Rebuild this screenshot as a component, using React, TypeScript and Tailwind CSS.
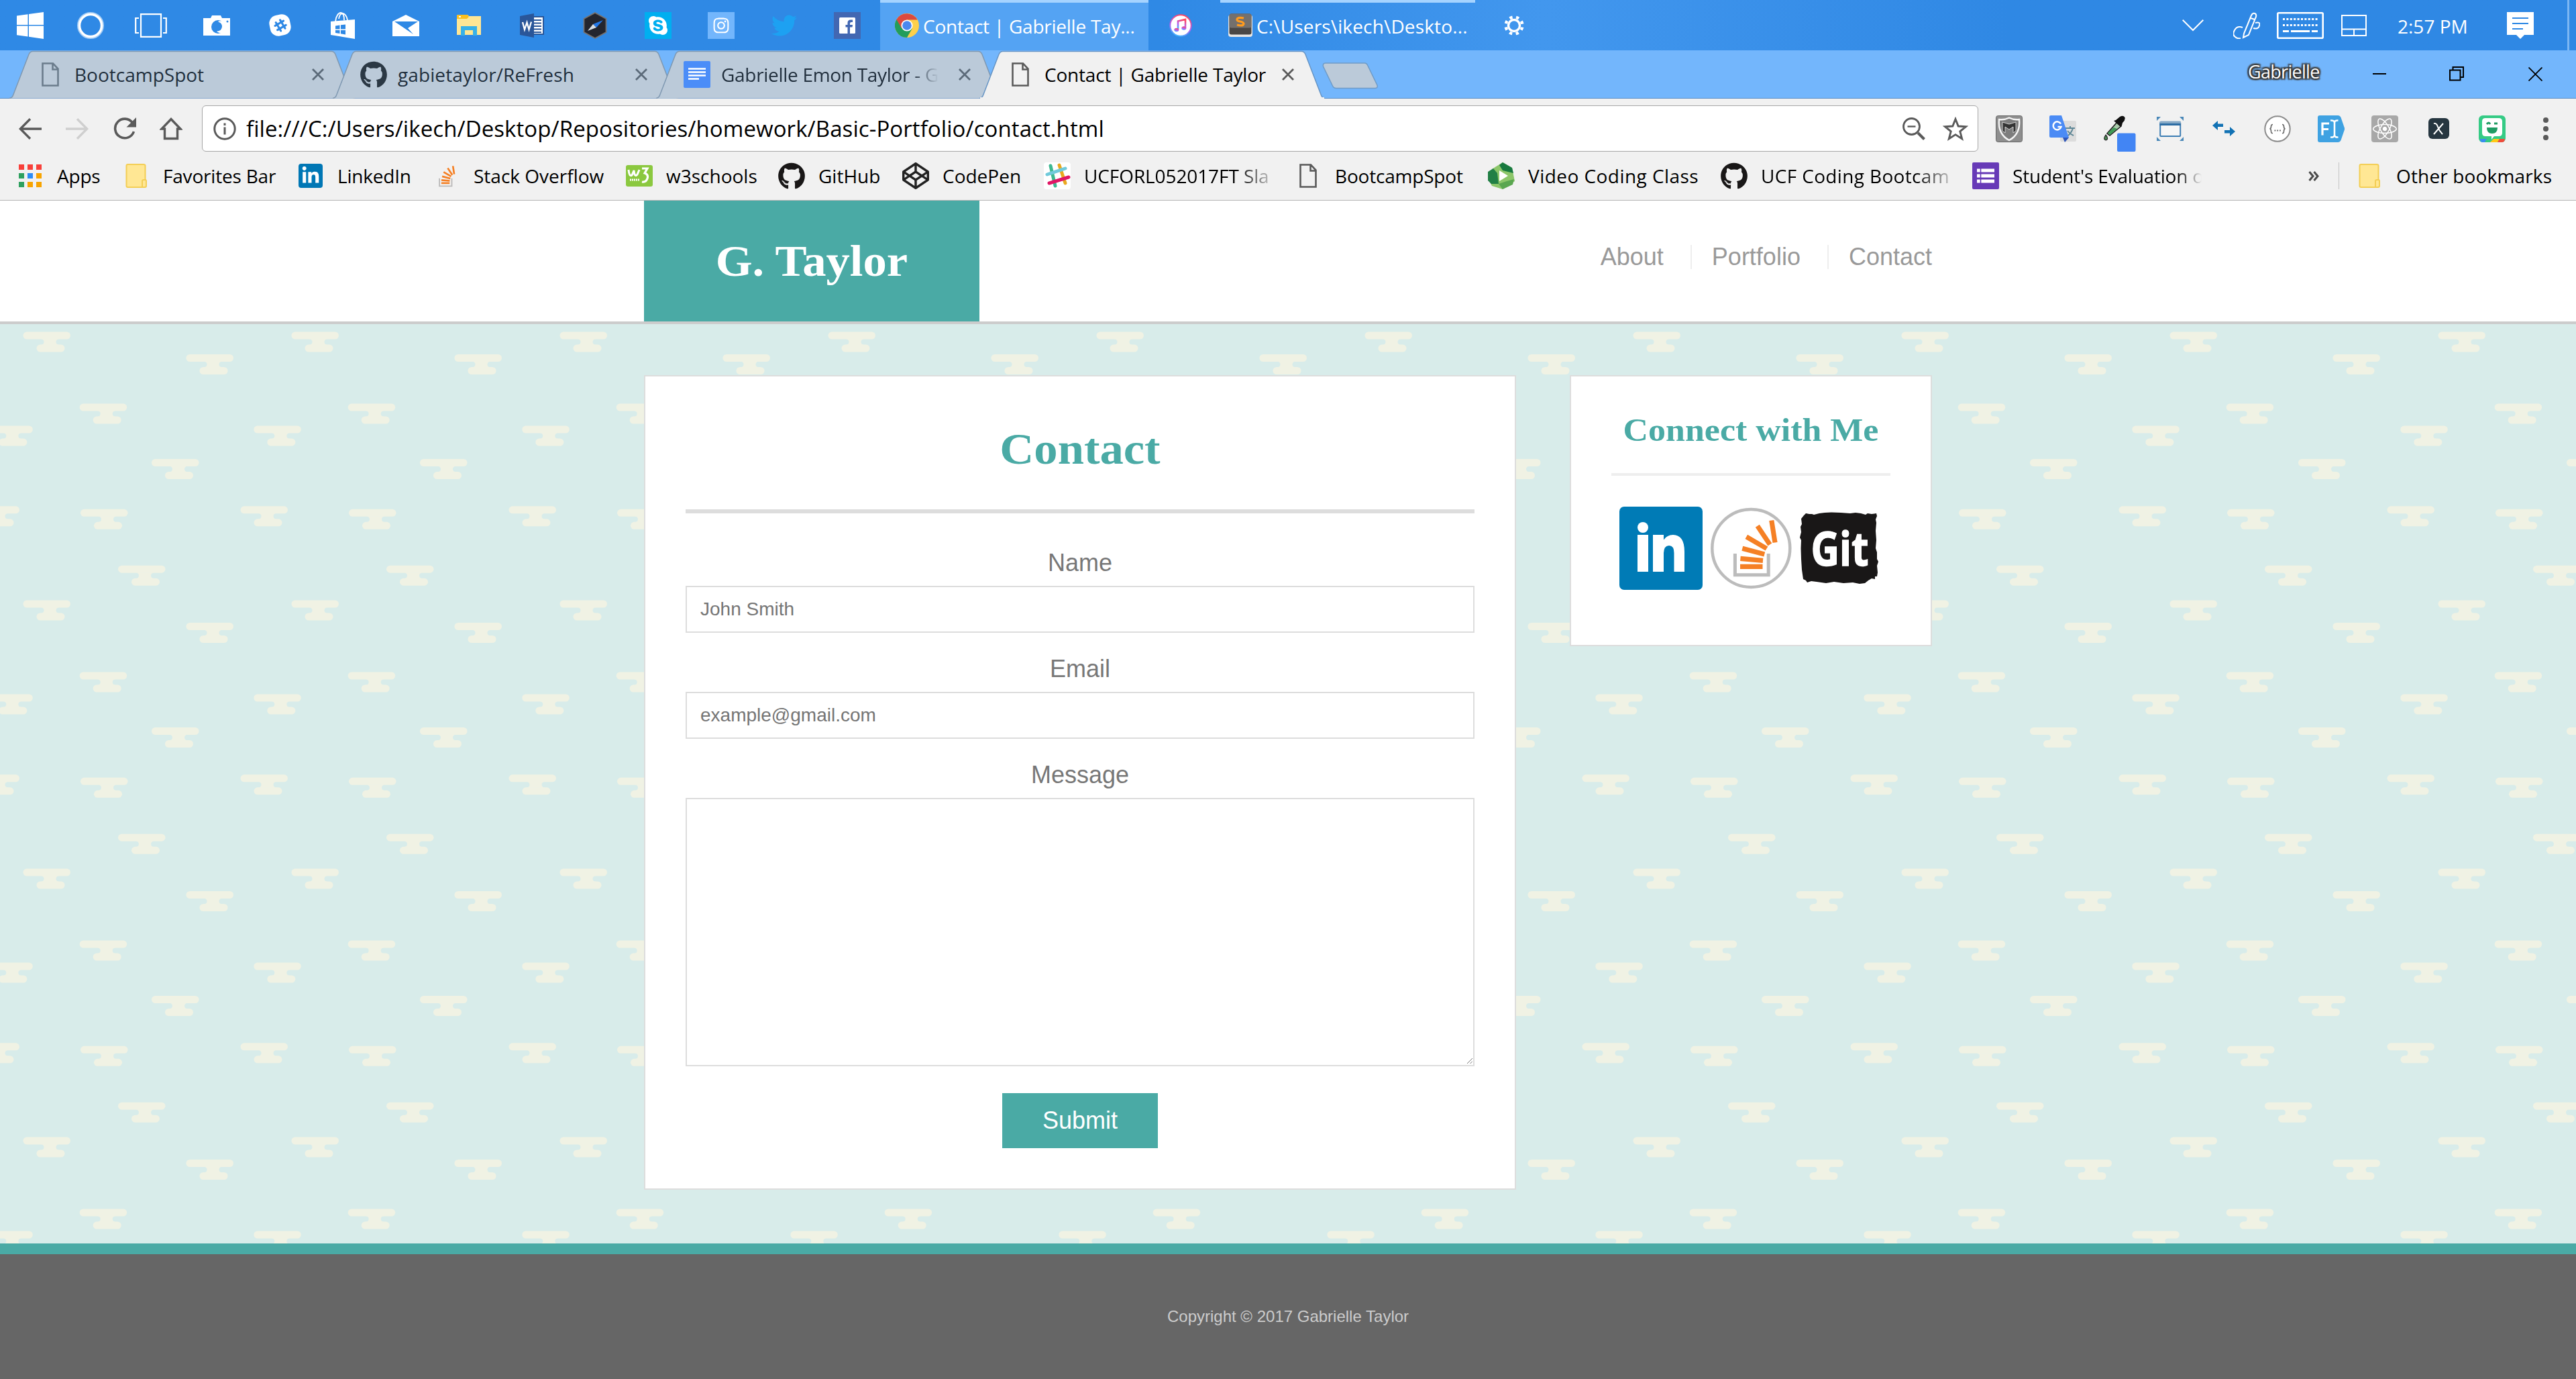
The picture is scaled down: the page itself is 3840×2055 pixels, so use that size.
import type { ReactNode } from "react";
import {
  FaCodepen,
  FaGithub,
  FaInstagram,
  FaLinkedinIn,
  FaReact,
  FaSkype,
  FaSlackHash,
  FaTwitter,
} from "react-icons/fa";

/* ---------- small shared icons ---------- */

const PageIcon = ({ color = "#5a5a5a" }: { color?: string }) => (
  <svg className="h-9 w-7" viewBox="0 0 28 36" fill="none" stroke={color} strokeWidth="2.6">
    <path d="M2.5 1.5H18L25.500 9.500V34.500H2.500ZM17.500 1.500V10.500H25.500" />
  </svg>
);

const FolderIcon = () => (
  <svg className="h-9 w-8" viewBox="0 0 32 36">
    <path
      d="M1.500 3Q1.500 1 3.500 1H27Q29.500 1 29.500 3V24Q31 24 31 26V33Q31 35 29 35H3.500Q1.500 35 1.500 33Z"
      fill="#ffe794"
      stroke="#f3ce55"
      strokeWidth="2"
    />
    <path d="M25 35V26Q25 24 27 24H31" fill="none" stroke="#f3ce55" strokeWidth="2" />
  </svg>
);

const StackBars = ({ base, bars }: { base: string; bars: string }) => (
  <g>
    <path d="M38.400 70V101.700H88.200V70" fill="none" stroke={base} strokeWidth="5" />
    <g stroke={bars} strokeWidth="7.200">
      <path d="M46 89.400H79.500" />
      <path d="M46.400 77.300L80 80.300" />
      <path d="M49.300 62.300L82.300 71" />
      <path d="M55.300 44.800L85.500 62.500" />
      <path d="M71.800 28.800L90.300 56.500" />
      <path d="M92.800 20.500L98 53.500" />
    </g>
  </g>
);

const AppsIcon = () => {
  const colors = ["#f8403a", "#f8403a", "#f8403a", "#2ea05f", "#2c8cf5", "#f7a400", "#2ea05f", "#f7a400", "#f7a400"];
  return (
    <div className="grid grid-cols-3 gap-[5px]">
      {colors.map((c, i) => (
        <span key={i} className="size-2" style={{ backgroundColor: c }} />
      ))}
    </div>
  );
};

/* ---------- taskbar ---------- */

const TaskCell = ({ children, wide = false }: { children: ReactNode; wide?: boolean }) => (
  <div className={wide ? "flex h-full w-[94px] items-center justify-center" : "flex h-full w-[90px] items-center justify-center"}>
    {children}
  </div>
);

const WindowsIcon = () => (
  <svg className="size-10" viewBox="0 0 40 40" fill="#fff">
    <path d="M0 5.500L16.500 3.200V19H0ZM18 3L40 0V19H18ZM0 20.500H16.500V36.500L0 34.200ZM18 20.500H40V40L18 36.800Z" />
  </svg>
);
const CortanaIcon = () => (
  <svg className="size-10" viewBox="0 0 40 40" fill="none">
    <circle cx="20" cy="20" r="18.500" stroke="#a5cdf5" strokeWidth="3" />
    <circle cx="20" cy="20" r="16.500" stroke="#fff" strokeWidth="3.500" />
  </svg>
);
const TaskViewIcon = () => (
  <svg className="h-9 w-12" viewBox="0 0 48 36" fill="none" stroke="#fff" strokeWidth="2.200">
    <path d="M9 1.100H39V34.900H9ZM6 7H1.200V29H6M42 7H46.800V29H42" />
  </svg>
);
const CameraIcon = () => (
  <svg className="h-[30px] w-[42px]" viewBox="0 0 42 30">
    <path d="M1 4H12L14 0H27L29 4H41V30H1Z" fill="#fff" />
    <circle cx="23" cy="17" r="10" fill="#2f89e5" />
    <path d="M23 9a9 9 0 1 1-2 15a10 10 0 0 0 2-15" fill="#fff" />
    <circle cx="22" cy="16.500" r="7" fill="#2f89e5" />
    <circle cx="37" cy="9" r="1.500" fill="#2f89e5" />
  </svg>
);
const SlackTile = () => (
  <div className="flex h-[31px] w-[31px] -rotate-12 items-center justify-center rounded-xl bg-white">
    <FaSlackHash className="size-[22px] text-[#2f89e5]" />
  </div>
);
const StoreIcon = () => (
  <svg className="h-10 w-9" viewBox="0 0 36 40">
    <path d="M7 14C8 5 12 1 15 1S20 4 20 12M12 10C13 4 16 2 18 2S24 5 25 12" fill="none" stroke="#fff" strokeWidth="1.800" />
    <path d="M0 14L36 11V40L0 34Z" fill="#fff" />
    <path d="M7 20.500L13.500 19.500V25.500H7ZM15 19.200L22 18.500V25.500H15ZM7 27H13.500V32L7 31ZM15 27H22V33.500L15 32.300Z" fill="#2f89e5" />
  </svg>
);
const MailIcon = () => (
  <svg className="h-8 w-10" viewBox="0 0 40 32">
    <path d="M0 10L20 0L40 10V32H0Z" fill="#fff" />
    <path d="M3 10H38L23 20L31 29Z" fill="#2f89e5" />
  </svg>
);
const ExplorerIcon = () => (
  <svg className="h-8 w-9" viewBox="0 0 36 32">
    <path d="M0 2Q0 0 2 0H16L18 2H36V30H0Z" fill="#ffe694" />
    <path d="M0 2Q0 0 2 0H16L18 3L15 6H0Z" fill="#fcbf1e" />
    <path d="M6 31V17H30V31H24V23H12V31Z" fill="#38b1e8" />
    <rect x="3" y="2" width="3" height="2" fill="#fff" />
  </svg>
);
const WordIcon = () => (
  <svg className="size-9" viewBox="0 0 36 36">
    <rect x="16" y="5" width="19" height="26" fill="#fff" stroke="#2a5699" strokeWidth="2" />
    <path d="M20 10H32M20 14.500H32M20 19H32M20 23.500H32M20 28H32" stroke="#2a5699" strokeWidth="2" />
    <path d="M0 4L21 0V36L0 32Z" fill="#2a5699" />
    <path d="M4 13L7 24L10.500 13.500L13.500 24L17 12.500" fill="none" stroke="#fff" strokeWidth="2.300" />
  </svg>
);
const CompassIcon = () => (
  <svg className="h-10 w-9" viewBox="0 0 36 40">
    <path d="M18 1L34.500 10V30L18 39L1.500 30V10Z" fill="#23252e" stroke="#77716d" strokeWidth="1.800" />
    <path d="M30 12L20 23L15 18Z" fill="#2277e8" />
    <path d="M7 28L20 23L15 18Z" fill="#d6dde4" />
  </svg>
);
const ChromeIcon = () => (
  <svg className="size-9" viewBox="0 0 36 36">
    <circle cx="18" cy="18" r="18" fill="#fdd04a" />
    <path d="M18 18L2.400 9A18 18 0 0 0 18 36L25.800 22.500Z" fill="#229d5b" />
    <path d="M2.400 9A18 18 0 0 1 33.600 9.500H18L10.200 22.500Z" fill="#db4a3f" />
    <circle cx="18" cy="18" r="8.600" fill="#fff" />
    <circle cx="18" cy="18" r="6.800" fill="#4a88f0" />
  </svg>
);
const ITunesIcon = () => (
  <svg className="size-[34px]" viewBox="0 0 34 34">
    <defs>
      <linearGradient id="itunes" x1="0.300" y1="1" x2="0.600" y2="0">
        <stop offset="0" stopColor="#3bb8ff" />
        <stop offset="0.450" stopColor="#b45ff0" />
        <stop offset="1" stopColor="#ff4560" />
      </linearGradient>
    </defs>
    <circle cx="17" cy="17" r="15.700" fill="#fff" stroke="url(#itunes)" strokeWidth="2" />
    <path d="M13 23V10.500L24 8V20.500" fill="none" stroke="url(#itunes)" strokeWidth="2.600" />
    <ellipse cx="10.800" cy="23.500" rx="3.500" ry="2.800" fill="url(#itunes)" />
    <ellipse cx="21.800" cy="21" rx="3.500" ry="2.800" fill="url(#itunes)" />
  </svg>
);
const SublimeIcon = () => (
  <svg className="size-9" viewBox="0 0 36 36">
    <rect x="0" y="2" width="36" height="33" rx="4" fill="#e8e6e4" />
    <rect x="1.500" y="0.500" width="33" height="31" rx="3" fill="#4a4745" />
    <rect x="1.500" y="0.500" width="33" height="21" rx="3" fill="#74706d" />
    <path d="M23 7Q13 5 13 9.500C13 13 23 11 23 15.500Q22 19.500 13 17" fill="none" stroke="#ff9b1e" strokeWidth="3.200" />
  </svg>
);
const GearIcon = () => (
  <svg className="size-[30px]" viewBox="0 0 30 30" fill="none" stroke="#fff">
    <circle cx="15" cy="15" r="8.500" strokeWidth="3.400" />
    <circle cx="15" cy="15" r="12.500" strokeWidth="4.400" strokeDasharray="4.300 5.517" strokeDashoffset="-2.700" />
  </svg>
);
const PenIcon = () => (
  <svg className="size-10" viewBox="0 0 40 40" fill="none" stroke="#fff" strokeWidth="2">
    <path d="M16 32L27 5Q29 1 32 2T34 7L23 34L15 38Z M26 9L32 11" />
    <path d="M14 23Q6 20 2 27T3 37Q6 40 11 39M33 16Q41 14 39 20Q38 26 30 24" />
  </svg>
);
const KeyboardIcon = () => (
  <svg className="h-10 w-[70px]" viewBox="0 0 70 40" fill="none" stroke="#fff">
    <rect x="1.300" y="1.300" width="67.400" height="37.400" rx="1.500" strokeWidth="2.600" />
    <path d="M9 10.500H61M9 19.500H61" strokeWidth="3" strokeDasharray="3 2.400" />
    <path d="M9 28.500H18M21 28.500H49M52 28.500H61" strokeWidth="3" />
  </svg>
);
const TouchpadIcon = () => (
  <svg className="h-8 w-[38px]" viewBox="0 0 38 32" fill="none" stroke="#fff" strokeWidth="2">
    <path d="M1 1H37V31H1ZM1 21.500H37M19 21.500V31" />
  </svg>
);
const ActionIcon = () => (
  <svg className="size-10" viewBox="0 0 40 40">
    <path d="M0 0H40V34H26L20 40L14 34H0Z" fill="#fff" />
    <path d="M8 9H32M8 17H32M8 25H24" stroke="#2f89e5" strokeWidth="2.200" />
  </svg>
);

const Taskbar = () => (
  <div className="flex h-[75px] items-center bg-linear-to-r from-[#2f89e5] from-45% via-[#4297ee] via-60% to-[#2f88e4] to-78% text-white">
    <TaskCell><WindowsIcon /></TaskCell>
    <TaskCell><CortanaIcon /></TaskCell>
    <TaskCell><TaskViewIcon /></TaskCell>
    <div className="ml-1.5 flex h-full w-[1036px] items-center">
      <TaskCell wide><CameraIcon /></TaskCell>
      <TaskCell wide><SlackTile /></TaskCell>
      <TaskCell wide><StoreIcon /></TaskCell>
      <TaskCell wide><MailIcon /></TaskCell>
      <TaskCell wide><ExplorerIcon /></TaskCell>
      <TaskCell wide><WordIcon /></TaskCell>
      <TaskCell wide><CompassIcon /></TaskCell>
      <TaskCell wide>
        <div className="flex size-10 items-center justify-center bg-[#00aff0]">
          <FaSkype className="size-8" />
        </div>
      </TaskCell>
      <TaskCell wide>
        <div className="flex size-10 items-center justify-center bg-[#73b6fc]">
          <FaInstagram className="size-[26px]" />
        </div>
      </TaskCell>
      <TaskCell wide><FaTwitter className="size-[38px] text-[#1da1f2]" /></TaskCell>
      <TaskCell wide>
        <div className="flex size-10 items-center justify-center bg-[#4267b2]">
          <svg className="size-6" viewBox="0 0 24 24">
            <rect width="24" height="24" rx="1.500" fill="#fff" />
            <path d="M16 24V14.500H19.500L20 11H16V9Q16 7 18 7H20V3.500H17Q12.500 3.500 12.500 8V11H9.500V14.500H12.500V24Z" fill="#4267b2" />
          </svg>
        </div>
      </TaskCell>
    </div>
    <div className="flex h-full w-[400px] items-center border-t-4 border-[#a5d3ff] bg-[#54a3f3] pl-[22px] pb-1">
      <ChromeIcon />
      <span className="ml-1.5 pt-0.5 text-[28px] tracking-[-0.25px] whitespace-nowrap">Contact | Gabrielle Tay...</span>
    </div>
    <div className="flex w-[107px] pl-[31px]"><ITunesIcon /></div>
    <div className="flex h-full w-[380px] items-center border-t-4 border-[#a5d3ff] pl-3 pb-1">
      <SublimeIcon />
      <span className="ml-1.5 pt-0.5 text-[28px] tracking-[0.15px] whitespace-nowrap">C:\Users\ikech\Deskto...</span>
    </div>
    <div className="ml-[43px]"><GearIcon /></div>
    <div className="ml-auto flex h-full items-center">
      <svg className="mr-11 h-[18px] w-8" viewBox="0 0 32 18" fill="none" stroke="#fff" strokeWidth="2">
        <path d="M0.700 0.700L16 16L31.300 0.700" />
      </svg>
      <PenIcon />
      <div className="mr-[26px] ml-[25px]"><KeyboardIcon /></div>
      <TouchpadIcon />
      <span className="ml-[46px] w-[163px] pt-0.5 text-[28px] whitespace-nowrap">2:57 PM</span>
      <ActionIcon />
      <div className="mr-2.5 ml-[50px] h-full w-[3px] bg-[#7bb6f3]" />
    </div>
  </div>
);

/* ---------- browser tabs ---------- */

const CloseIcon = ({ color }: { color: string }) => (
  <svg className="size-[18px]" viewBox="0 0 18 18" stroke={color} strokeWidth="2.800">
    <path d="M1 1L17 17M17 1L1 17" />
  </svg>
);

const Tab = ({ icon, title, active = false, text }: { icon: ReactNode; title: string; active?: boolean; text: string }) => (
  <div className={active ? "z-10 -mr-[33px] grid h-[72px] w-[515px]" : "-mr-[33px] grid h-[72px] w-[515px]"}>
    <svg className="col-start-1 row-start-1 h-[72px] w-[515px]" viewBox="0 0 515 72">
      <path
        d="M0 71.500Q4 71 5.500 67L29 6Q31 1.500 35 1.500H480Q484 1.500 486 6L509.500 67Q511 71 515 71.500"
        fill={active ? "#f1f1f1" : "#bbcad9"}
        stroke={active ? "#6795c5" : "#7f98b1"}
        strokeWidth="1.500"
      />
      {active && <rect x="1" y="70" width="513" height="2" fill="#f1f1f1" />}
    </svg>
    <div className="col-start-1 row-start-1 flex items-center pl-[41px]">
      <span className="flex w-10 items-center justify-center">{icon}</span>
      <span className="ml-4 flex w-[354px]">
        <span className={`text-[28px] leading-9 whitespace-nowrap ${text}`}>{title}</span>
      </span>
      <CloseIcon color={active ? "#5a5a5a" : "#5b6a79"} />
    </div>
  </div>
);

const DocsIcon = () => (
  <svg className="size-10" viewBox="0 0 40 40">
    <rect width="40" height="40" rx="2" fill="#4b8df8" />
    <path d="M7 11.500H33M7 16.500H33M7 21.500H33M7 26.500H23" stroke="#fff" strokeWidth="2.600" />
  </svg>
);

const TabStrip = () => (
  <div className="flex h-[72px] border-b-[1.5px] border-[#5e8fc4] bg-[#73b6fc]">
    <div className="flex pl-3.5">
      <Tab icon={<PageIcon color="#6b7c8c" />} title="BootcampSpot" text="text-[#22303e]" />
      <Tab
        icon={<FaGithub className="size-[41px] text-[#2b3844]" />}
        title="gabietaylor/ReFresh"
        text="tracking-[0.1px] text-[#22303e]"
      />
      <Tab
        icon={<DocsIcon />}
        title="Gabrielle Emon Taylor - G"
        text="mask-r-from-88% mask-r-to-100% tracking-[-0.3px] text-[#22303e]"
      />
      <Tab icon={<PageIcon />} title="Contact | Gabrielle Taylor" active text="tracking-[-0.2px] text-black" />
    </div>
    <svg className="mt-[18px] ml-[29px] h-10 w-[84px]" viewBox="0 0 84 40">
      <path d="M1.500 6Q0.500 1 5 1H63Q66.500 1 68 5L82 34Q83 38.500 79 38.500H21Q17 38.500 15.500 35Z" fill="#bbcad9" stroke="#6f9bc6" strokeWidth="1.500" />
    </svg>
    <div className="ml-auto flex h-[66px] items-center text-black">
      <span className="w-[186px] pb-0.5 text-[27px] tracking-[-0.7px] text-white [text-shadow:0_0_2px_#333,0_0_2px_#333,0_0_3px_#333,0_0_3px_#333,2px_2px_2px_#444,-2px_-2px_2px_#444,2px_-2px_2px_#444,-2px_2px_2px_#444]">
        Gabrielle
      </span>
      <span className="mt-1 h-0.5 w-5 bg-black" />
      <svg className="mt-1 ml-[94px] size-[22px]" viewBox="0 0 22 22" fill="none" stroke="#000" strokeWidth="2">
        <path d="M1 5.500H16.500V20.500H1ZM5.500 5V1H21V16H17" />
      </svg>
      <svg className="mt-1 mr-[50px] ml-24 size-[21px]" viewBox="0 0 21 21" stroke="#000" strokeWidth="1.800">
        <path d="M0.500 0.500L20.500 20.500M20.500 0.500L0.500 20.500" />
      </svg>
    </div>
  </div>
);

/* ---------- address bar ---------- */

const ExtCell = ({ children }: { children: ReactNode }) => (
  <div className="flex w-20 items-center justify-center">{children}</div>
);

const Toolbar = () => (
  <div className="flex h-[89px] items-center">
    <svg className="ml-7 h-8 w-[34px]" viewBox="0 0 34 32" fill="none" stroke="#5a5a5a" strokeWidth="3.400">
      <path d="M34 16H3M17 1.200L2.300 16L17 30.800" />
    </svg>
    <svg className="ml-9 h-8 w-[34px]" viewBox="0 0 34 32" fill="none" stroke="#cfcfcf" strokeWidth="3.400">
      <path d="M0 16H31M17 1.200L31.700 16L17 30.800" />
    </svg>
    <svg className="ml-9 h-[34px] w-9" viewBox="0 0 36 34">
      <path d="M29.500 8A14.300 14.300 0 1 0 31.500 21" fill="none" stroke="#5a5a5a" strokeWidth="3.600" />
      <path d="M35 0V14.500H20.500Z" fill="#5a5a5a" />
    </svg>
    <svg className="ml-[34px] h-[34px] w-[34px]" viewBox="0 0 34 34" fill="none" stroke="#5a5a5a" strokeWidth="3.400">
      <path d="M17 2.500L31 17H26.500V31.500H7.500V17H3Z" />
    </svg>
    <div className="ml-[29px] flex h-[69px] w-[2648px] items-center rounded-md border-[1.5px] border-[#a6a6a6] bg-white">
      <svg className="ml-4 size-[34px]" viewBox="0 0 34 34" fill="none" stroke="#5a5a5a" strokeWidth="3">
        <circle cx="17" cy="17" r="15.200" />
        <path d="M17 14.500V25.500M17 8.500V12" />
      </svg>
      <span className="ml-[15px] text-[33px] tracking-[0.08px] whitespace-nowrap text-black">
        file:///C:/Users/ikech/Desktop/Repositories/homework/Basic-Portfolio/contact.html
      </span>
      <svg className="ml-auto h-[34px] w-[34px]" viewBox="0 0 34 34" fill="none" stroke="#5a5a5a" strokeWidth="2.800">
        <circle cx="13.500" cy="13.500" r="12" />
        <path d="M7.500 13.500H19.500" strokeWidth="2.400" />
        <path d="M23 23L32.500 32.500" strokeWidth="4" />
      </svg>
      <svg className="mr-[14px] ml-[26px] h-9 w-[38px]" viewBox="0 0 38 36" fill="none" stroke="#5a5a5a" strokeWidth="2.900">
        <path d="M19 3.500L23.200 14L34.500 14.700L25.800 21.800L28.700 32.700L19 26.600L9.300 32.700L12.200 21.800L3.500 14.700L14.800 14Z" />
      </svg>
    </div>
    <div className="ml-[6px] flex">
      <ExtCell>
        <svg className="size-10" viewBox="0 0 40 40">
          <rect x="0.500" y="0.500" width="39" height="39" rx="3" fill="#8e8e8e" stroke="#666" />
          <path d="M5 6Q13 7 20 3.500Q27 7 35 6Q37 28 20 37Q3 28 5 6Z" fill="#7d7d7d" stroke="#f4f4f4" strokeWidth="2.400" />
          <path d="M10 10L20 13L30 10V23L26 26V17L20 21L14 17V26L10 23Z" fill="#333" stroke="#eee" strokeWidth="0.800" />
        </svg>
      </ExtCell>
      <ExtCell>
        <svg className="size-10" viewBox="0 0 40 40">
          <rect x="16" y="8" width="24" height="31" rx="2" fill="#dcdcdc" />
          <path d="M24 19H38M31 16V19M35 19Q33 27 25 32M27 23Q31 28 36 30" stroke="#5f8796" strokeWidth="2" fill="none" />
          <path d="M2 0H18L29 33H2Q0 33 0 31V2Q0 0 2 0Z" fill="#4b8bf5" />
          <path d="M20 33H29L23 40Z" fill="#2f56b8" />
          <path d="M17 12.500A6 6 0 1 0 17.500 17H12.500" fill="none" stroke="#fff" strokeWidth="2.500" />
        </svg>
      </ExtCell>
      <ExtCell>
        <svg className="-mb-3.5 ml-2.5 h-[54px] w-[48px]" viewBox="0 0 48 54">
          <path d="M20 10L26 16L9 30L5 27Z" fill="#a9c9aa" stroke="#222" strokeWidth="1.600" />
          <path d="M15 18L20 20L9 29L6 26Z" fill="#3f9a55" />
          <path d="M15 8L18 7L24 2Q29 -1 31.500 3Q32.500 7 28 11L27 15L25 17Z" fill="#111" />
          <path d="M3 29Q-0.500 34 1.500 36Q4 38 5.500 35Q6 32 3 29Z" fill="#4c8a55" stroke="#222" strokeWidth="1.200" />
          <rect x="20" y="26.500" width="27.500" height="27.500" rx="2" fill="#4285f4" />
        </svg>
      </ExtCell>
      <ExtCell>
        <svg className="size-10" viewBox="0 0 40 40">
          <path d="M0 2H6L0 8ZM34 2H40V8ZM0 38V32L6 38ZM40 38H34L40 32Z" fill="#4a88b8" />
          <rect x="5.200" y="10" width="30" height="21" rx="1" fill="#f6f6f6" stroke="#3d7db3" strokeWidth="2" />
          <path d="M4.500 10Q4.500 8.500 6 8.500H34.500Q36 8.500 36 10V12.500H4.500Z" fill="#86a9c6" />
          <path d="M4.500 13.500H36" stroke="#2c6da4" strokeWidth="3" />
        </svg>
      </ExtCell>
      <ExtCell>
        <svg className="h-6 w-[34px]" viewBox="0 0 34 24" fill="#1272b4">
          <path d="M0 7L8 0V4.500H16V9H8V14ZM34 16L26 23V18.500H18V14H26V9Z" />
        </svg>
      </ExtCell>
      <ExtCell>
        <svg className="size-10" viewBox="0 0 40 40" fill="none" stroke="#8b8b8b">
          <circle cx="20" cy="20" r="18.700" fill="#fff" strokeWidth="2" />
          <path d="M13 13.500Q10.500 13.500 10.500 16.500T8.500 20Q10.500 20 10.500 23.500T13 26.500M27 13.500Q29.500 13.500 29.500 16.500T31.500 20Q29.500 20 29.500 23.500T27 26.500" stroke="#666" strokeWidth="1.600" />
          <path d="M15.500 22.500H25.500" stroke="#666" strokeWidth="1.800" strokeDasharray="1.800 2" />
        </svg>
      </ExtCell>
      <ExtCell>
        <svg className="size-10" viewBox="0 0 40 40" fill="none" stroke="#fff" strokeWidth="3.200">
          <path d="M3 0H30Q33 0 34.500 3L40 19V21L34.500 37Q33 40 30 40H3Q0 40 0 37V3Q0 0 3 0Z" fill="#3fa2e2" stroke="none" />
          <path d="M7 29.500V12H17M7 20.500H16" />
          <path d="M19 7.500Q25 7 25 11V29Q25 33 19 32.500M30.500 7.500Q25 7 25 11M30.500 32.500Q25 33 25 29" strokeWidth="2.600" />
        </svg>
      </ExtCell>
      <ExtCell>
        <div className="flex size-10 items-center justify-center rounded-sm bg-[#a8a8a8]">
          <FaReact className="size-9 text-white" />
        </div>
      </ExtCell>
      <ExtCell>
        <div className="flex size-[31px] items-center justify-center rounded-md bg-[#263640]">
          <svg className="size-[18px]" viewBox="0 0 18 18" fill="none" stroke="#fff" strokeWidth="2">
            <path d="M2 1Q6 0 8 6T15 17M16 1L2 17" />
          </svg>
        </div>
      </ExtCell>
      <ExtCell>
        <svg className="size-10" viewBox="0 0 40 40">
          <rect width="40" height="40" rx="6" fill="#35cb85" />
          <path d="M2 35L12 35L9 40H6Q2 40 2 35Z" fill="#3a8df0" />
          <path d="M17 40L22 35H31L28 40Z" fill="#ffca16" />
          <path d="M28 40L31 35H39Q39 40 34 40Z" fill="#f04b3c" />
          <path d="M10 4H30Q35 4 35 9V26Q35 31 30 31H23L19 36V31H10Q5 31 5 26V9Q5 4 10 4Z" fill="#fff" />
          <path d="M12 18H28Q28 27 20 27T12 18Z" fill="#1f9c63" />
          <path d="M12 13Q15 9 17 13M23 12H28" stroke="#1f9c63" strokeWidth="3" fill="none" />
        </svg>
      </ExtCell>
      <ExtCell>
        <div className="flex flex-col gap-[5px]">
          <span className="size-2 rounded-full bg-[#5a5a5a]" />
          <span className="size-2 rounded-full bg-[#5a5a5a]" />
          <span className="size-2 rounded-full bg-[#5a5a5a]" />
        </div>
      </ExtCell>
    </div>
  </div>
);

/* ---------- bookmarks ---------- */

const Bookmark = ({
  icon,
  label,
  width,
  text = "tracking-[-0.2px]",
}: {
  icon: ReactNode;
  label: string;
  width: string;
  text?: string;
}) => (
  <div className={`flex shrink-0 items-center ${width}`}>
    <span className="flex w-10 shrink-0 items-center justify-center">{icon}</span>
    <span className={`mb-px ml-5 text-[28px] leading-9 whitespace-nowrap text-black ${text}`}>{label}</span>
  </div>
);

const BookmarksBar = () => (
  <div className="flex h-[63px] items-center border-b-[1.5px] border-[#b5b5b5] pb-2.5 pl-[25px]">
    <Bookmark icon={<AppsIcon />} label="Apps" width="w-[158px]" />
    <Bookmark icon={<FolderIcon />} label="Favorites Bar" width="w-[260px]" text="tracking-[-0.2px]" />
    <Bookmark
      icon={
        <span className="flex size-9 items-center justify-center rounded-sm bg-[#0077b5]">
          <FaLinkedinIn className="size-7 text-white" />
        </span>
      }
      label="LinkedIn"
      width="w-[203px]"
    />
    <Bookmark
      icon={
        <svg className="h-[34px] w-8" viewBox="30 14 76 92">
          <StackBars base="#bcbbbb" bars="#f58025" />
        </svg>
      }
      label="Stack Overflow"
      width="w-[287px]"
      text="tracking-normal"
    />
    <Bookmark
      icon={
        <svg className="h-8 w-10" viewBox="0 0 40 32" fill="none" stroke="#fff">
          <rect width="40" height="32" rx="3" fill="#8bc83f" stroke="none" />
          <path d="M4 7Q5 18 9 15L12 8Q13 19 17 14L20 7" strokeWidth="3" />
          <path d="M24 5H32L28 12Q34 14 32 20T24 25" strokeWidth="3.200" />
          <path d="M6 22H20" strokeWidth="3" strokeDasharray="2 1" />
        </svg>
      }
      label="w3schools"
      width="w-[227px]"
      text="tracking-normal"
    />
    <Bookmark icon={<FaGithub className="size-[41px] text-[#191717]" />} label="GitHub" width="w-[185px]" text="tracking-normal" />
    <Bookmark icon={<FaCodepen className="size-10 text-[#222]" />} label="CodePen" width="w-[211px]" text="tracking-normal" />
    <Bookmark
      icon={
        <svg className="size-10" viewBox="0 0 40 40" strokeWidth="5" strokeLinecap="round">
          <rect width="40" height="40" rx="4" fill="#fff" />
          <path d="M10 5L17 35" stroke="#3eb890" />
          <path d="M23 4L32 31" stroke="#e9a820" />
          <path d="M5 18L32 9" stroke="#70cadb" />
          <path d="M8 31L37 22" stroke="#e01765" />
        </svg>
      }
      label="UCFORL052017FT Sla"
      width="w-[374px]"
      text="mask-r-from-82% mask-r-to-105% tracking-[-0.1px]"
    />
    <Bookmark icon={<PageIcon />} label="BootcampSpot" width="w-[288px]" />
    <Bookmark
      icon={
        <svg className="size-10" viewBox="0 0 40 40">
          <path d="M22 0L36 8L40 28L22 40L6 35L0 24L6 10Z" fill="#8cc66a" />
          <path d="M17 4L22 0L36 8L38 16L22 12Z" fill="#17793f" />
          <path d="M0 14L8 9L14 16L16 32H5L0 27Z" fill="#217f45" />
          <path d="M16 32L28 28L39 25L37 33L22 40Z" fill="#5aa650" />
          <path d="M17 12L30 20L17 28Z" fill="#fff" />
        </svg>
      }
      label="Video Coding Class"
      width="w-[347px]"
      text="tracking-[0.45px]"
    />
    <Bookmark
      icon={<FaGithub className="size-[41px] text-[#191717]" />}
      label="UCF Coding Bootcam"
      width="w-[375px]"
      text="mask-r-from-82% mask-r-to-105% tracking-[0.35px]"
    />
    <Bookmark
      icon={
        <svg className="size-10" viewBox="0 0 40 40">
          <rect width="40" height="40" rx="2" fill="#673ab7" />
          <path d="M7 12H33M7 20H33M7 28H33" stroke="#fff" strokeWidth="5" />
          <path d="M12.500 9V31" stroke="#673ab7" strokeWidth="1.600" />
        </svg>
      }
      label="Student's Evaluation o"
      width="w-[344px]"
      text="mask-r-from-86% mask-r-to-99% tracking-[-0.2px]"
    />
    <svg className="ml-[157px] h-[15px] w-[17px]" viewBox="0 0 17 15" fill="none" stroke="#4a4a4a" strokeWidth="3">
      <path d="M1.500 1L7 7.500L1.500 14M8.500 1L14 7.500L8.500 14" />
    </svg>
    <span className="mr-[25px] ml-7 h-10 w-px bg-[#c4c4c4]" />
    <Bookmark icon={<FolderIcon />} label="Other bookmarks" width="w-[320px]" text="tracking-[0.15px]" />
  </div>
);

/* ---------- portfolio page ---------- */

const cloudSpots = [
  [34.5, 11.5],
  [277.5, 45],
  [118.7, 118.5],
  [378.3, 151.5],
  [-21.7, 151.5],
  [226, 201],
  [358.5, 271.3],
  [-41.5, 271.3],
  [120, 275.8],
  [176, 359.7],
];

const CloudPattern = () => (
  <svg className="col-start-1 row-start-1 h-full w-full" aria-hidden="true">
    <defs>
      <g id="cloud" fill="#f0f2e4">
        <rect width="70.500" height="11" rx="5.500" />
        <rect x="20" y="19" width="42" height="11" rx="5.500" />
        <path d="M26 10.500Q31 11 31 15T26 19.500H54Q49 19 49 15T54 10.500Z" />
      </g>
      <pattern id="clouds" width="400" height="400" patternUnits="userSpaceOnUse">
        {cloudSpots.map(([x, y], i) => (
          <use key={i} href="#cloud" x={x} y={y} />
        ))}
      </pattern>
    </defs>
    <rect width="100%" height="100%" fill="url(#clouds)" />
  </svg>
);

const Header = () => (
  <header className="h-[184px] border-b-4 border-[#ccc] bg-white">
    <div className="mx-auto flex h-full w-[1920px] justify-between">
      <h1 className="flex w-[500px] items-center justify-center bg-[#4aaaa5] pb-[2px] font-['Georgia','Liberation_Serif',serif] text-[66px] font-bold text-white">
        <span className="scale-x-[1.07]">G. Taylor</span>
      </h1>
      <nav className="flex h-9 translate-y-[66px] text-4xl leading-9 text-[#999]">
        <a className="border-r-2 border-[#eee] pr-10 leading-9">About</a>
        <a className="border-r-2 border-[#eee] pr-10 pl-[30px] leading-9">Portfolio</a>
        <a className="pl-[30px] leading-9">Contact</a>
      </nav>
    </div>
  </header>
);

const ContactForm = () => (
  <section className="h-[1214px] w-[1300px] border-2 border-[#ddd] bg-white px-[60px] pt-[72px] text-center">
    <h2 className="scale-x-[1.07] font-['Georgia','Liberation_Serif',serif] text-[66px] leading-[72px] font-bold text-[#4aaaa5]">
      Contact
    </h2>
    <hr className="mt-[54px] h-1.5 border-0 bg-[#ddd]" />
    <form className="mt-[53px]">
      <label className="block text-4xl leading-[42px] text-[#777]">Name</label>
      <input
        className="mt-[13px] block h-[70px] w-full border-2 border-[#ddd] px-5 text-[28px] placeholder:text-[#757575]"
        placeholder="John Smith"
      />
      <label className="mt-[33px] block text-4xl leading-[42px] text-[#777]">Email</label>
      <input
        className="mt-[13px] block h-[70px] w-full border-2 border-[#ddd] px-5 text-[28px] placeholder:text-[#757575]"
        placeholder="example@gmail.com"
      />
      <label className="mt-[33px] block text-4xl leading-[42px] text-[#777]">Message</label>
      <div className="mt-[13px] flex h-[400px] items-end justify-end border-2 border-[#ddd]">
        <svg className="mr-px mb-0.5 size-2" viewBox="0 0 8 8" stroke="#777" strokeWidth="1">
          <path d="M0 8L8 0M4.500 8L8 4.500" />
        </svg>
      </div>
      <button type="button" className="mt-10 h-[82px] bg-[#4aaaa5] px-[60px] text-4xl leading-[42px] text-white">
        Submit
      </button>
    </form>
  </section>
);

const Connect = () => (
  <aside className="h-[404px] w-[540px] border-2 border-[#ddd] bg-white px-[60px] pt-[52px] text-center">
    <h3 className="scale-x-[1.06] font-['Georgia','Liberation_Serif',serif] text-[49px] leading-14 font-bold whitespace-nowrap text-[#4aaaa5]">
      Connect with Me
    </h3>
    <hr className="mt-9 h-1 border-0 bg-[#eee]" />
    <div className="mt-[46px] flex justify-center gap-2.5">
      <svg className="size-[124px]" viewBox="0 0 124 124" fill="#fff">
        <rect width="124" height="124" rx="7" fill="#007bb6" />
        <circle cx="35" cy="31" r="8" />
        <path d="M27 42H43V97H27ZM50 42H66V49.500Q71 42 80 42Q97 42.500 97 67V97H81.500V69Q81.500 58 74 58T66 69V97H50Z" />
      </svg>
      <svg className="size-[124px]" viewBox="0 0 124 124">
        <circle cx="62.300" cy="62" r="58" fill="none" stroke="#bcbcbc" strokeWidth="4.500" />
        <StackBars base="#bcbcbc" bars="#f58025" />
      </svg>
      <svg className="size-[124px]" viewBox="0 0 124 124">
        <path
          d="M7 13L10 10L15 11L19 11L22 12L30 10L38 9L48 8.500L62 9L76 10L84 9L92 10L99 12L102 10L108 11L115 10L116 14L114 19L115 24L114 36L115 50L114 62L116 68L116 78L118 82L116 88L117 98L116 104L113 104L113 108L108 107L103 110L98 114L90 115L80 113L66 114L52 112L40 114L26 112L18 111L12 113L10 110L6 108L4 94L3 78L2.500 62L3 50L1 46L3 38L2 30L4 26L3 18Z"
          fill="#191717"
        />
        <text
          x="17.500"
          y="87.500"
          className="font-['Open_Sans'] text-[70px] font-bold"
          fill="#fff"
          stroke="#fff"
          strokeWidth="1.500"
          textLength="86"
          lengthAdjust="spacingAndGlyphs"
        >
          Git
        </text>
      </svg>
    </div>
  </aside>
);

export default function App() {
  return (
    <div className="flex h-[2055px] w-[3840px] flex-col overflow-hidden font-['Liberation_Sans',sans-serif]">
      <div className="bg-[#f1f1f1] font-['Segoe_UI','Open_Sans',sans-serif]">
        <Taskbar />
        <TabStrip />
        <Toolbar />
        <BookmarksBar />
      </div>
      <Header />
      <main className="grid h-[1370px] bg-[#d8ecea]">
        <CloudPattern />
        <div className="col-start-1 row-start-1 mx-auto flex w-[1920px] items-start gap-20 pt-[76px]">
          <ContactForm />
          <Connect />
        </div>
      </main>
      <footer className="flex flex-1 items-center justify-center border-t-16 border-[#4aaaa5] bg-[#666] text-2xl text-[#ccc]">
        Copyright © 2017 Gabrielle Taylor
      </footer>
    </div>
  );
}
